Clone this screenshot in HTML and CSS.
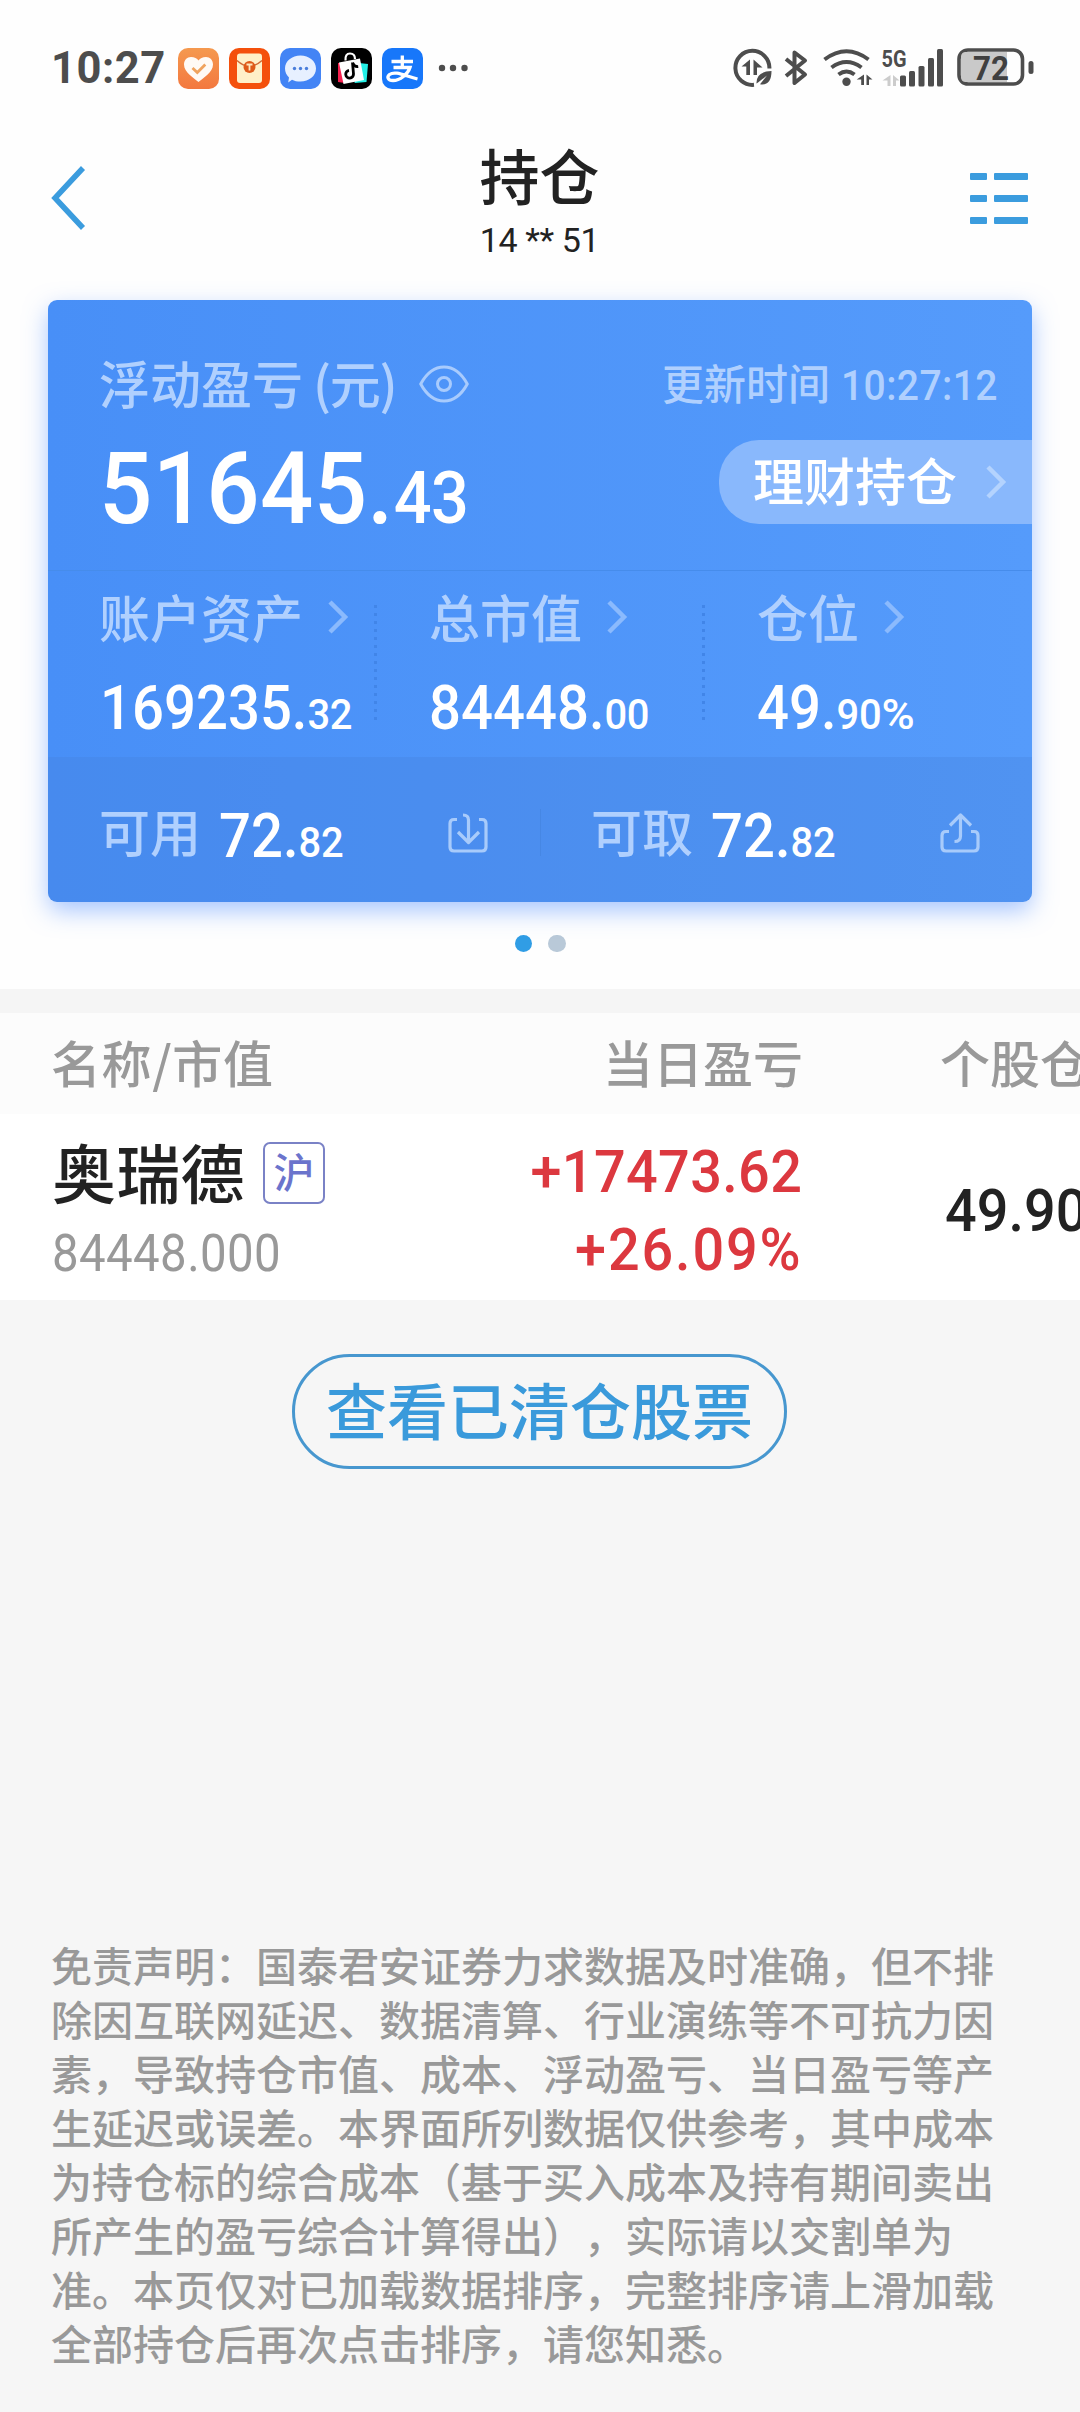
FILE: index.html
```html
<!DOCTYPE html>
<html lang="zh-CN">
<head>
<meta charset="utf-8">
<title>持仓</title>
<link rel="stylesheet" href="styles.css">
</head>
<body>
<div class="page">
  <div class="status">
    <span class="clock">10:27</span>
    <div class="apps">
      <svg class="app" viewBox="0 0 41 41"><defs><linearGradient id="heart" x1="0" y1="0" x2="0" y2="1"><stop offset="0" stop-color="#f5994f"/><stop offset="1" stop-color="#f3783f"/></linearGradient></defs><rect width="41" height="41" rx="10" fill="url(#heart)"/><path d="M20.500 34C16 30 6 24.500 6 16.500C6 12 9 9 13 9C16.500 9 19 10.500 20.500 12.500C22 10.500 24.500 9 28 9C32 9 35 12 35 16.500C35 24.500 25 30 20.500 34Z" fill="#fffaf5"/><path d="M14.500 20l4.800 4.600 8-8" fill="none" stroke="#f0a35e" stroke-width="2.800"/></svg>
      <svg class="app" viewBox="0 0 41 41"><rect width="41" height="41" rx="10" fill="#f4500c"/><rect x="8" y="5.500" width="25" height="29.500" rx="3" fill="#fff0c8"/><path d="M8 12.500Q20.500 24 33 12.500" fill="none" stroke="#cf6a35" stroke-width="1.500"/><circle cx="20.500" cy="19" r="6" fill="#df5a18"/><path d="M17.500 16.500h6M20.500 16.500v6" stroke="#fde6bd" stroke-width="1.800"/></svg>
      <svg class="app" viewBox="0 0 41 41"><rect width="41" height="41" rx="10" fill="#4384f5"/><path d="M20.500 7.500C29 7.500 36 13 36 20.500S29 33.500 20.500 33.500C17 33.500 14.500 33 12 31.700L8.200 34.500 9 29.500C6.500 27 5 24 5 20.500C5 13 12 7.500 20.500 7.500Z" fill="#e7f0ff"/><g fill="#4a7edb"><circle cx="14.500" cy="20.500" r="1.700"/><circle cx="20.500" cy="20.500" r="1.700"/><circle cx="26.500" cy="20.500" r="1.700"/></g></svg>
      <svg class="app" viewBox="0 0 41 41"><rect width="41" height="41" rx="10" fill="#000"/><path d="M7 15l8 0-1 20-7-1z" fill="#f5204f"/><path d="M28 15l9 1-1.500 18-12 1z" fill="#25f0e6"/><path d="M8 14.500L29 10.500 33 32 12.500 36Z" fill="#fff"/><path d="M14.500 12.500Q14 5.500 19 5.500T24 11" fill="none" stroke="#fff" stroke-width="2.200"/><path d="M21.500 14.500l1 11.500a3.900 3.900 0 1 1-4.500-3.700M21.700 15q1.500 4 5.500 3.500" fill="none" stroke="#000" stroke-width="2.800"/></svg>
      <svg class="app" viewBox="0 0 41 41"><rect width="41" height="41" rx="10" fill="#1777fa"/><path d="M9.500 13.500h21.500M20.300 7.500v12M11.500 19.500H28C26 26 18 32.500 11 32.500C6 32.500 4.500 29 7.500 26.500C13 22.500 22 27.500 35.500 31" fill="none" stroke="#fff" stroke-width="3.300"/></svg>
    </div>
    <svg class="more" viewBox="0 0 30 8"><g fill="#4d4d4d"><circle cx="4" cy="4" r="3.200"/><circle cx="15" cy="4" r="3.200"/><circle cx="26.500" cy="4" r="3.200"/></g></svg>
    <svg class="system" viewBox="0 0 302 40">
      <g fill="none" stroke="#4d4d4d" stroke-width="4">
        <path d="M36.400 20.500A17 17 0 1 0 21 36.800"/>
        <path d="M53 11l19 15.500-10.500 8.500V4.500l10.500 8L53 28" stroke-linejoin="round"/>
        <path d="M91.500 11.500Q113.500-5 135.500 11.500M98.500 19.500Q113.500 8.500 128.500 19.500M105.500 26.500Q113.500 20.500 121.500 26.500"/>
        <rect x="226" y="2" width="63.500" height="34" rx="9" stroke-width="3.600"/>
      </g>
      <g fill="#4d4d4d">
        <path d="M17 11.500v15.500h-3.700v-8.500H8.500zM20.500 11.500v15.500h3.500v-7.500h5.500z"/>
        <path d="M23.500 35.500Q23 23.500 38.500 23Q38.500 38 27 36.200L34 27.500 25 34.500z"/>
        <circle cx="113.500" cy="33.800" r="4.200"/>
        <path d="M131 26.500v10.500h-2.800v-5.500h-4.500zM133.500 26.500v10.500h2.500v-5.500h3.500z"/>
        <rect x="167" y="27.500" width="6" height="11" rx="1.500"/><rect x="176" y="23" width="6" height="15.500" rx="1.500"/><rect x="185.500" y="18" width="6" height="20.500" rx="1.500"/><rect x="195" y="10" width="6" height="28.500" rx="1.500"/><rect x="204" y="1" width="6" height="37.500" rx="1.500"/>
        <rect x="295.500" y="13" width="5" height="13" rx="2.500"/>
      </g>
      <path d="M157.500 27v11h-3v-5.500h-5zM160 27v11h3v-5.500h3.500z" fill="#ccc"/>
      <path d="M233 4h41v30h-41q-5 0-5-5V9q0-5 5-5z" fill="#c9c9c9"/>
      <text x="148.500" y="18.500" class="net" textLength="25" lengthAdjust="spacingAndGlyphs">5G</text>
      <text x="240" y="31.500" class="charge" textLength="36" lengthAdjust="spacingAndGlyphs">72</text>
    </svg>
  </div>

  <header class="header">
    <svg class="back" viewBox="0 0 36 64"><path d="M33 2L5 32 33 62" fill="none" stroke="#3b9cde" stroke-width="5.500"/></svg>
    <div class="heading">
      <h1>持仓</h1>
      <span class="account">14 ** 51</span>
    </div>
    <svg class="list" viewBox="0 0 58 52"><g fill="#3b9cde"><rect y="0" width="17" height="7" rx="1"/><rect x="24" y="0" width="34" height="7" rx="1"/><rect y="22" width="17" height="7" rx="1"/><rect x="24" y="22" width="34" height="7" rx="1"/><rect y="44" width="17" height="7" rx="1"/><rect x="24" y="44" width="34" height="7" rx="1"/></g></svg>
  </header>

  <section class="card">
    <div class="summary">
      <div class="line title">
        <span class="label">浮动盈亏<span class="unit">(元)</span></span>
        <svg class="eye" viewBox="0 0 50 38"><g fill="none" stroke="#a8cbfd" stroke-width="3"><path d="M1.700 19Q11 2 25 2T48.300 19Q39 36 25 36T1.700 19Z" stroke-linejoin="round"/><circle cx="25" cy="19" r="6.500"/></g></svg>
        <span class="updated">更新时间 <b class="num">10:27:12</b></span>
      </div>
      <div class="line">
        <span class="num total">51645.<small>43</small></span>
        <div class="pill">理财持仓<svg class="chev" viewBox="0 0 20 34"><path d="M2 2l15 15L2 32"/></svg></div>
      </div>
    </div>
    <div class="metrics">
      <div class="metric">
        <div class="label">账户资产<svg class="chev" viewBox="0 0 20 34"><path d="M2 2l15 15L2 32"/></svg></div>
        <span class="num value">169235.<small>32</small></span>
      </div>
      <div class="metric">
        <div class="label">总市值<svg class="chev" viewBox="0 0 20 34"><path d="M2 2l15 15L2 32"/></svg></div>
        <span class="num value">84448.<small>00</small></span>
      </div>
      <div class="metric">
        <div class="label">仓位<svg class="chev" viewBox="0 0 20 34"><path d="M2 2l15 15L2 32"/></svg></div>
        <span class="num value rate">49.<small>90<span class="pct">%</span></small></span>
      </div>
    </div>
    <div class="cash">
      <div class="cell">
        <span class="label">可用</span><span class="num value">72.<small>82</small></span>
        <svg class="move" viewBox="0 0 40 40"><path d="M9 6.500H6q-4 0-4 4V34q0 4 4 4h28q4 0 4-4V10.500q0-4-4-4h-3M15 2q5.500 0 5.500 5v22M10 19l10.500 10.500L31 19"/></svg>
      </div>
      <div class="cell">
        <span class="label">可取</span><span class="num value">72.<small>82</small></span>
        <svg class="move" viewBox="0 0 40 40"><path d="M9 18.500H6q-4 0-4 4V34q0 4 4 4h28q4 0 4-4V22.500q0-4-4-4h-3M10 12.500L20.500 2 31 12.500M20.500 3v20q0 5.500-6 5.500"/></svg>
      </div>
    </div>
  </section>
  <div class="pager"><i class="on"></i><i></i></div>

  <section class="holdings">
    <div class="thead"><span class="title-col">名称/市值</span><span class="day">当日盈亏</span><span class="share">个股仓</span></div>
    <div class="row">
      <div class="stock">
        <div class="name">奥瑞德<span class="tag">沪</span></div>
        <span class="num worth">84448.000</span>
      </div>
      <div class="day gain"><span class="num">+17473.62</span><span class="num percent">+26.09%</span></div>
      <div class="share"><span class="num">49.90</span></div>
    </div>
  </section>

  <div class="cleared">查看已清仓股票</div>

  <p class="notice">免责声明：国泰君安证券力求数据及时准确，但不排<br>除因互联网延迟、数据清算、行业演练等不可抗力因<br>素，导致持仓市值、成本、浮动盈亏、当日盈亏等产<br>生延迟或误差。本界面所列数据仅供参考，其中成本<br>为持仓标的综合成本（基于买入成本及持有期间卖出<br>所产生的盈亏综合计算得出），实际请以交割单为<br>准。本页仅对已加载数据排序，完整排序请上滑加载<br>全部持仓后再次点击排序，请您知悉。</p>
</div>
</body>
</html>
```

FILE: styles.css
```css
* { box-sizing: border-box; }
body {
  margin: 0;
  background: #f6f6f6;
  color: #222;
  font-family: "Noto Sans CJK SC", sans-serif;
  font-weight: 500;
}
svg { display: block; flex: none; overflow: visible; }
.page { width: 1080px; height: 2412px; overflow: hidden; white-space: nowrap; }

/* narrow figures */
.num {
  display: inline-block;
  font-family: Roboto, sans-serif;
  font-weight: 500;
  transform: scaleX(.93);
  transform-origin: 0 50%;
}
.num small { font-size: .71em; line-height: 0; letter-spacing: -.01em; }

/* status bar */
.status { display: flex; align-items: center; height: 136px; padding: 0 45px 0 51px; background: #fefefe; }
.clock { width: 127px; padding-top: 1px; font: 700 43.500px/50px Roboto, sans-serif; letter-spacing: .5px; color: #4d4d4d; }
.apps { display: flex; gap: 10px; }
.app { width: 41px; height: 41px; }
.more { width: 30px; height: 8px; margin-left: 15px; }
.system { width: 302px; height: 40px; margin-left: auto; }
.net { font: 700 24px Roboto, sans-serif; fill: #4d4d4d; }
.charge { font: 700 34px Roboto, sans-serif; fill: #404040; }

/* title bar */
.header { display: flex; justify-content: space-between; height: 164px; padding: 0 52px 0 50px; background: #fefefe; }
.back { width: 36px; height: 64px; margin-top: 30px; }
.heading { display: flex; flex-direction: column; align-items: center; gap: 16px; padding: 8px 0 0 23px; }
h1 { margin: 0; font-size: 60px; line-height: 60px; font-weight: 500; }
.account { font: 400 34px/40px Roboto, sans-serif; letter-spacing: -.4px; }
.list { width: 58px; height: 52px; margin-top: 37px; }

/* account card */
.card {
  width: 984px;
  height: 602px;
  margin: 0 auto;
  border-radius: 9px;
  background: linear-gradient(90deg, #488ff7, #559bfb);
  box-shadow: 0 9px 24px -1px rgba(74, 137, 255, .5);
  color: #fff;
  position: relative;
}
.card::before { content: ""; position: absolute; z-index: -1; left: -48px; right: -48px; top: -10px; height: 699px; background: #fefefe; }
.label { display: flex; align-items: center; font-size: 51px; line-height: 60px; color: #b0d0fe; }
.unit { margin-left: 10px; letter-spacing: -1.300px; }
.chev { width: 20px; height: 34px; fill: none; stroke: #8bbafd; stroke-width: 4.500; }
.summary { height: 271px; padding: 52px 0 0 51px; border-bottom: 1px solid #468ceb; }
.line { display: flex; align-items: center; }
.line.title { height: 60px; }
.line + .line { margin-top: 28px; }
.eye { width: 50px; height: 38px; margin: 3px 0 0 23px; }
.updated { margin-left: auto; width: 370px; height: 60px; font-size: 42px; line-height: 60px; color: #b0d0fe; }
.updated .num { line-height: 50px; margin-left: 2px; letter-spacing: .4px; }
.total { padding-top: 6.500px; margin-left: 0; font-size: 101px; line-height: 84px; letter-spacing: .3px; }
.line .total { height: 91px; margin-bottom: -7px; }
.pill {
  display: flex;
  align-items: center;
  width: 313px;
  height: 84px;
  margin-left: auto;
  padding: 0 0 6px 34px;
  border-radius: 40px 0 0 40px;
  background: #89b8fc;
  font-size: 51px;
}
.pill .chev { margin: 5px 0 0 29px; stroke: #b4d3fe; }

.metrics { display: grid; grid-template-columns: repeat(3, 328px); height: 186px; }
.metric { position: relative; padding: 15px 0 0 53px; }
.metric:first-child { padding-left: 51px; }
.metric .label { margin-bottom: 33px; }
.metric .chev { margin: 2px 0 0 25px; }
.metric + .metric::before {
  content: "";
  position: absolute;
  left: -2px;
  top: 34px;
  width: 3px;
  height: 116px;
  background: repeating-linear-gradient(#4185e8 0 3px, transparent 3px 8px);
}
.value { display: block; font-size: 60.500px; line-height: 60px; }
.metric:first-child .value { margin-left: 1px; }
.pct { display: inline-block; line-height: 1; transform: scaleX(1.13); transform-origin: 0 50%; }

.cash { display: grid; grid-template-columns: 492px 492px; height: 145px; border-radius: 0 0 9px 9px; background: rgba(67, 127, 216, .28); }
.cell { display: flex; align-items: center; position: relative; padding-left: 51px; }
.cell .value { margin: 15px 0 0 18px; }
.cell .move { margin: 6px 52px 0 auto; }
.cell + .cell::before { content: ""; position: absolute; left: 0; top: 52px; width: 1px; height: 47px; background: #4687e4; }
.move { width: 40px; height: 40px; fill: none; stroke: #a8cbfb; stroke-width: 3.200; stroke-linejoin: round; }

.pager { display: flex; justify-content: center; gap: 16px; height: 87px; padding-top: 32.500px; }
.pager i { width: 17.500px; height: 17.500px; border-radius: 50%; background: #b9c9d8; }
.pager .on { background: #309de5; }

/* holdings table */
.holdings { border-top: 24px solid #f5f5f5; }
.thead { display: flex; align-items: center; height: 101px; padding: 0 0 6px 51px; background: #fcfcfc; font-size: 50px; line-height: 60px; color: #999; }
.title-col, .stock { flex: none; width: 350px; }
.title-col { letter-spacing: .6px; }
.day { flex: none; width: 402px; text-align: right; }
.share { flex: none; margin-left: 137px; }
.row { display: flex; height: 186px; padding-left: 52px; background: #fff; }
.stock { padding-top: 21px; }
.name { display: flex; align-items: center; font-size: 64px; line-height: 70px; letter-spacing: .3px; }
.tag { width: 62px; height: 62px; margin: 5px 0 0 18px; border: 2.500px solid #7a82c6; border-radius: 7px; color: #6b74cc; font-size: 41px; line-height: 53px; letter-spacing: 0; text-align: center; }
.worth { font-size: 51px; line-height: 60px; margin-top: 19px; font-weight: 400; letter-spacing: .4px; color: #999; }
.day.gain { display: flex; flex-direction: column; align-items: flex-end; width: 400px; padding-top: 19px; color: #dc383f; font-size: 60px; line-height: 78px; }
.gain .num { transform-origin: 100% 50%; letter-spacing: .4px; }
.gain .percent { letter-spacing: 2px; margin-right: -1px; }
.row .share { padding-top: 52px; margin-left: 143px; font-size: 60px; line-height: 78px; }
.share .num { display: block; margin-top: 6px; }

.cleared {
  width: 495px;
  height: 115px;
  margin: 54px 0 0 292px;
  border: 3px solid #4797cf;
  border-radius: 58px;
  color: #3a9adb;
  font-size: 61px;
  line-height: 103px;
  text-align: center;
}
.notice { margin: 468px 0 0 51px; font-size: 41px; line-height: 54px; color: #999; text-spacing-trim: space-all; }
```
